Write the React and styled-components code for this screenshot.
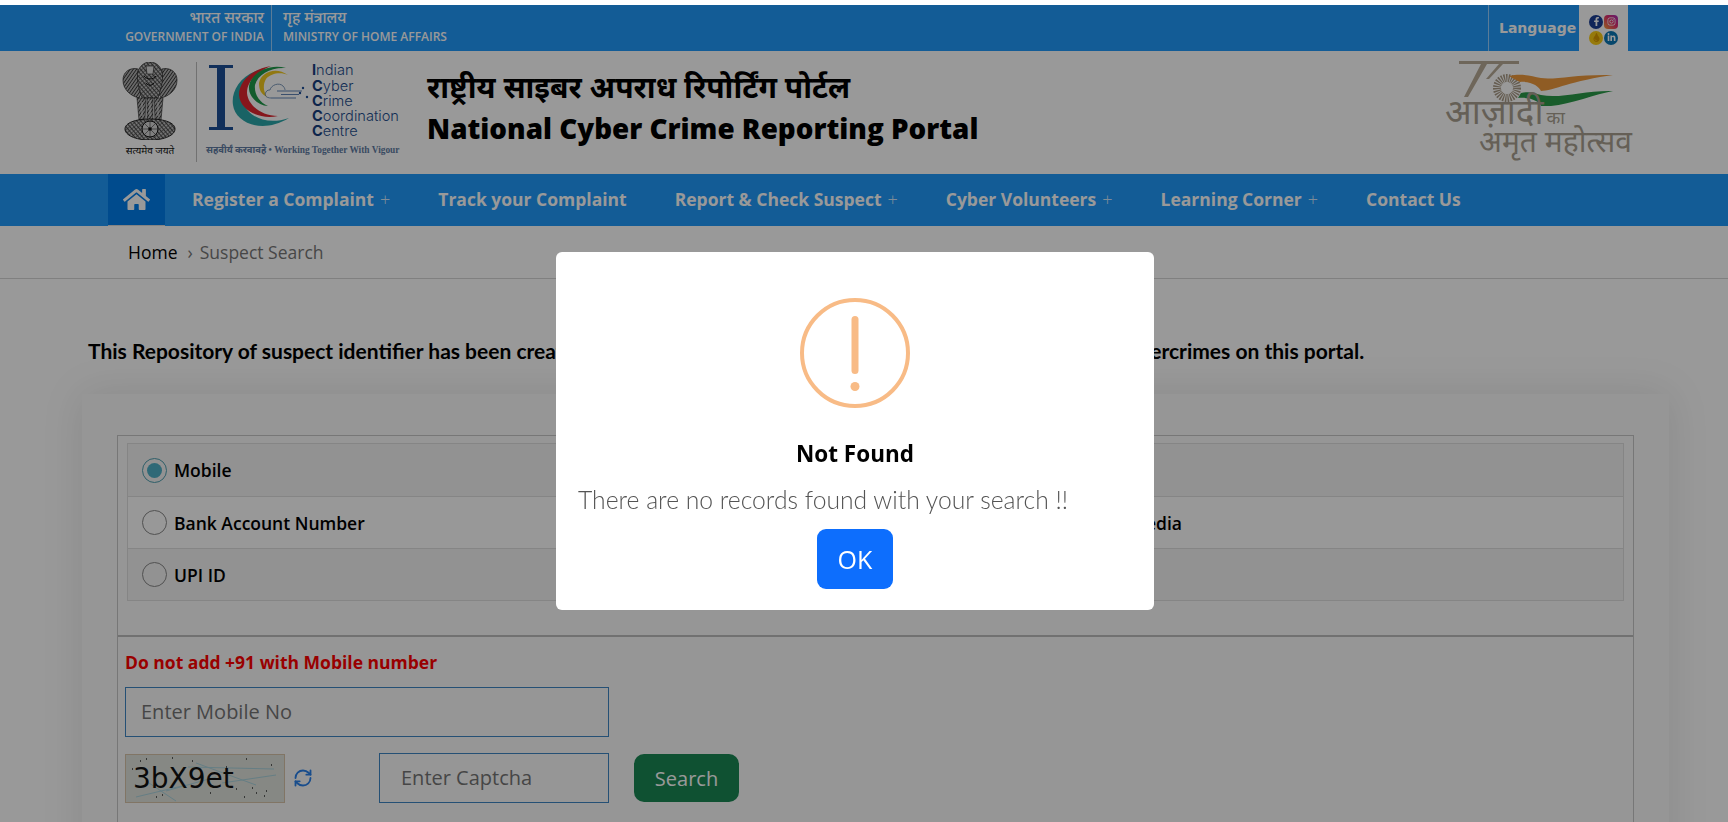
import React from 'react';
import styled, { createGlobalStyle } from 'styled-components';
import { FaHome, FaFacebookF, FaInstagram, FaLinkedinIn, FaTint } from 'react-icons/fa';
import { RefreshCw } from 'lucide-react';

const DEVA = `"Noto Sans Devanagari", "Lohit Devanagari", "Noto Sans", "DejaVu Sans", sans-serif`;
const SANS = `"Open Sans", "Noto Sans", sans-serif`;

const GlobalStyle = createGlobalStyle`
  html, body {
    margin: 0;
    height: 100%;
    overflow: hidden;
    background: #fff;
    font-family: ${SANS};
  }
  * { box-sizing: border-box; }
`;

const Page = styled.div`
  padding-top: 5px;
`;

const TopBar = styled.div`
  height: 46px;
  background: #2099fa;
  display: flex;
  justify-content: space-between;
  padding: 0 100px 0 124px;
  color: #fff;
`;

const GovGroup = styled.div`
  display: flex;
`;

const GovBlock = styled.div`
  display: flex;
  flex-direction: column;
  justify-content: center;
  text-align: ${(p) => (p.$right ? 'right' : 'left')};
  padding: ${(p) => (p.$right ? '0 7px 0 0' : '0 0 0 11px')};
  border-right: ${(p) => (p.$right ? '1px solid #ffffff88' : 'none')};
  width: ${(p) => (p.$right ? '148px' : 'auto')};
`;

const GovHindi = styled.div`
  font-family: ${DEVA};
  font-size: 15.4px;
  line-height: 18px;
  font-weight: 500;
  white-space: nowrap;
`;

const GovEnglish = styled.div`
  font-size: 12px;
  line-height: 18px;
  font-weight: 600;
  white-space: nowrap;
`;

const ToolGroup = styled.div`
  display: flex;
`;

const Language = styled.div`
  width: 91px;
  border-left: 1px solid #ffffff88;
  padding-left: 10px;
  display: flex;
  align-items: center;
  font-family: "DejaVu Sans", sans-serif;
  font-size: 14px;
  font-weight: 700;
`;

const Socials = styled.div`
  width: 49px;
  background: #fff;
  display: grid;
  grid-template-columns: 14px 14px;
  grid-auto-rows: 14px;
  gap: 2px 1px;
  justify-content: center;
  align-content: center;
  padding-top: 3px;
`;

const SocialDot = styled.span`
  width: 14px;
  height: 14px;
  border-radius: ${(p) => (p.$square ? '4px' : '50%')};
  background: ${(p) => p.$bg};
  color: ${(p) => p.$fg || '#fff'};
  display: flex;
  align-items: center;
  justify-content: center;
  font-size: 9px;
`;

const Header = styled.header`
  height: 123px;
  display: flex;
  align-items: center;
  padding: 0 93px 0 122px;
  background: #fff;
`;

const EmblemBlock = styled.div`
  width: 56px;
  margin-bottom: 6px;
  display: flex;
  flex-direction: column;
  align-items: center;
`;

const EmblemCaption = styled.div`
  margin-top: 6px;
  font-family: ${DEVA};
  font-size: 10px;
  line-height: 12px;
  color: #111;
  white-space: nowrap;
`;

const LogoDivider = styled.div`
  width: 1px;
  height: 100px;
  margin: 0 9px 2px 18px;
  background: #bcbcbc;
`;

const LogoBlock = styled.div`
  display: flex;
  flex-direction: column;
  width: 196px;
  margin-bottom: 6px;
`;

const LogoTop = styled.div`
  display: flex;
  padding-left: 3px;
`;

const LogoWords = styled.div`
  font-family: Inter, sans-serif;
  font-size: 14.6px;
  line-height: 15.3px;
  font-weight: 300;
  color: #1f4f8f;
  padding-top: 1px;
  b { font-weight: 700; color: #17407f; }
`;

const Tagline = styled.div`
  margin-top: 5px;
  font-family: "Liberation Serif", ${DEVA};
  font-size: 9.4px;
  font-weight: 700;
  color: #5f7ca3;
  white-space: nowrap;
`;

const Titles = styled.div`
  margin-left: 25px;
  padding-bottom: 8px;
  color: #000;
`;

const TitleHindi = styled.div`
  font-family: ${DEVA};
  font-size: 30px;
  line-height: 38px;
  font-weight: 700;
  white-space: nowrap;
`;

const TitleEnglish = styled.div`
  font-size: 27.8px;
  line-height: 36px;
  font-weight: 800;
  white-space: nowrap;
`;

const AzadiBlock = styled.div`
  margin-left: auto;
  margin-bottom: 10px;
  width: 190px;
  color: #a89f90;
  font-family: ${DEVA};
`;

const AzadiLine = styled.div`
  font-size: ${(p) => p.$size}px;
  line-height: ${(p) => p.$lead}px;
  padding-left: ${(p) => p.$indent}px;
  white-space: nowrap;
  small { font-size: 18px; margin-left: 3px; }
`;

const Nav = styled.nav`
  height: 52px;
  background: #2099fa;
  display: flex;
  padding-left: 108px;
`;

const HomeTab = styled.a`
  width: 57px;
  margin-right: 3px;
  background: #007deb;
  border-bottom: 1px solid #ddd;
  color: #fff;
  display: flex;
  align-items: center;
  justify-content: center;
  font-size: 27px;
`;

const NavItem = styled.a`
  padding: 0 24px 2px;
  display: flex;
  align-items: center;
  gap: 6px;
  color: #fff;
  font-size: 17.5px;
  font-weight: 700;
  white-space: nowrap;
`;

const Plus = styled.span`
  font-weight: 300;
  font-size: 18px;
  opacity: 0.8;
`;

const Crumbs = styled.div`
  height: 53px;
  border-bottom: 1px solid #d6d6d6;
  padding: 0 0 0 128px;
  display: flex;
  align-items: center;
  font-size: 17.5px;
  color: #000;
`;

const CrumbRest = styled.span`
  color: #777;
  margin-left: 10px;
  &::before {
    content: '›';
    margin-right: 7px;
  }
`;

const Main = styled.main`
  padding: 0 59px 0 82px;
`;

const Intro = styled.p`
  margin: 58px 0 29px 6px;
  font-family: Lato, sans-serif;
  font-size: 21px;
  line-height: 28px;
  font-weight: 700;
  color: #000;
  white-space: nowrap;
`;

const Card = styled.section`
  background: #fbfbfb;
  box-shadow: 0 0 40px rgba(0, 0, 0, 0.1);
  padding: 41px 35px 40px;
`;

const FieldBox = styled.div`
  border: 1px solid #c6c6c6;
`;

const ChoiceArea = styled.div`
  padding: 7px 9px 34px;
  border-bottom: 2px solid #bdbdbd;
`;

const ChoicePanel = styled.div`
  border: 1px solid #dedede;
`;

const ChoiceRow = styled.div`
  height: ${(p) => p.$h}px;
  display: grid;
  grid-template-columns: 755px 1fr;
  background: ${(p) => (p.$odd ? '#f3f3f3' : '#fdfdfd')};
  border-bottom: ${(p) => (p.$last ? 'none' : '1px solid #dedede')};
`;

const Choice = styled.label`
  display: flex;
  align-items: center;
  gap: 7px;
  padding-left: 14px;
  font-size: 17.5px;
  font-weight: 600;
  color: #000;
`;

const Radio = styled.span`
  width: 25px;
  height: 25px;
  border-radius: 50%;
  border: 1px solid ${(p) => (p.$on ? '#4f9fb0' : '#888')};
  display: flex;
  align-items: center;
  justify-content: center;
  &::after {
    content: '';
    width: 15px;
    height: 15px;
    border-radius: 50%;
    background: ${(p) => (p.$on ? '#4fb0c6' : 'transparent')};
  }
`;

const FormArea = styled.div`
  padding: 13px 7px 40px;
`;

const Warning = styled.div`
  font-size: 17.5px;
  line-height: 24px;
  font-weight: 700;
  color: #f00;
  margin-bottom: 13px;
`;

const TextField = styled.input`
  display: block;
  width: ${(p) => p.$w}px;
  height: 50px;
  border: 1px solid #3f86c4;
  background: transparent;
  padding: 0 ${(p) => p.$pad}px 2px;
  font-family: ${SANS};
  font-size: 20px;
  &::placeholder { color: #757575; opacity: 1; }
`;

const CaptchaRow = styled.div`
  margin-top: 16px;
  display: flex;
  align-items: center;
`;

const CaptchaImage = styled.div`
  width: 160px;
  height: 49px;
  border: 1px solid #d8c4a8;
  flex: none;
`;

const RefreshButton = styled.span`
  width: 94px;
  padding-left: 8px;
  color: #2a80ea;
  display: flex;
`;

const SearchButton = styled.button`
  margin-left: 25px;
  width: 105px;
  height: 48px;
  border: none;
  border-radius: 10px;
  background: #198754;
  color: #fff;
  font-family: ${SANS};
  font-size: 20px;
`;

const Overlay = styled.div`
  position: fixed;
  inset: 5px 18px 0 0;
  box-shadow: 18px 0 0 rgba(0, 0, 0, 0.4);
  background: rgba(0, 0, 0, 0.4);
  display: flex;
  justify-content: center;
  align-items: flex-start;
  padding-top: 247px;
`;

const Modal = styled.div`
  width: 598px;
  height: 358px;
  background: #fff;
  border-radius: 6px;
  display: flex;
  flex-direction: column;
  align-items: center;
  padding-top: 46px;
`;

const ModalTitle = styled.h2`
  margin: 28px 0 0;
  font-size: 22.5px;
  line-height: 36px;
  font-weight: 700;
  color: #000;
`;

const ModalText = styled.p`
  margin: 10px 0 0;
  padding-left: 22px;
  align-self: stretch;
  font-family: Lato, sans-serif;
  font-weight: 300;
  font-size: 24.7px;
  line-height: 36px;
  color: #545454;
  white-space: nowrap;
`;

const OkButton = styled.button`
  margin-top: 11px;
  width: 76px;
  height: 60px;
  border: none;
  border-radius: 9px;
  background: #0d6efd;
  color: #fff;
  font-family: ${SANS};
  font-size: 25px;
`;

function Emblem() {
  return (
    <svg width="56" height="78" viewBox="0 0 56 78">
      <defs>
        <pattern id="hatch" width="2.6" height="2.6" patternUnits="userSpaceOnUse" patternTransform="rotate(35)">
          <rect width="2.6" height="2.6" fill="#b0b0b0" />
          <rect width="0.8" height="2.6" fill="#2a2a2a" />
        </pattern>
        <pattern id="hatchCross" width="3" height="3" patternUnits="userSpaceOnUse" patternTransform="rotate(-40)">
          <rect width="3" height="3" fill="#bcbcbc" />
          <rect width="0.8" height="3" fill="#2a2a2a" />
          <rect width="3" height="0.6" fill="#444" />
        </pattern>
      </defs>
      {/* side lions */}
      <path d="M1 18C1 10 8 5 16 7L20 30L17 36C9 34 1 28 1 18Z" fill="url(#hatch)" stroke="#222" strokeWidth="0.7" />
      <path d="M55 18C55 10 48 5 40 7L36 30L39 36C47 34 55 28 55 18Z" fill="url(#hatch)" stroke="#222" strokeWidth="0.7" />
      {/* centre lion */}
      <path d="M16 9C19 2 24 0 28 0C32 0 37 2 40 9C42 18 38 30 36 36H20C18 30 14 18 16 9Z" fill="url(#hatchCross)" stroke="#222" strokeWidth="0.7" />
      <path d="M24 4H32L31 12H25Z" fill="#dedede" stroke="#222" strokeWidth="0.6" />
      <path d="M22 14C25 18 31 18 34 14M24 21C26 24 30 24 32 21" stroke="#111" strokeWidth="1" fill="none" />
      {/* legs */}
      <path d="M15 36H24L23 58H17ZM25 36H31L31 58H25ZM32 36H41L39 58H33Z" fill="url(#hatch)" stroke="#222" strokeWidth="0.6" />
      <path d="M20 40V54M28 38V54M36 40V54" stroke="#e6e6e6" strokeWidth="0.8" />
      {/* base */}
      <path d="M3 67C3 61 13 57 28 57C43 57 53 61 53 67C53 73 43 78 28 78C13 78 3 73 3 67Z" fill="url(#hatchCross)" stroke="#111" strokeWidth="0.9" />
      <circle cx="28" cy="67" r="8" fill="#d6d6d6" stroke="#111" strokeWidth="1" />
      <circle cx="28" cy="67" r="1.8" fill="#111" />
      <path d="M28 59V75M20 67H36M22.4 61.4L33.6 72.6M33.6 61.4L22.4 72.6" stroke="#111" strokeWidth="0.5" />
    </svg>
  );
}

function IccLogo() {
  return (
    <svg width="103" height="72" viewBox="98 14 103 72" fill="none" style={{ flex: 'none' }}>
      <path d="M98 17H122V20H114V79H122V82H98V79H106V20H98Z" fill="#1d4f97" />
      <path d="M148 22C128 28 120 45 122 57C124 74 150 87 178 70C155 78 136 68 132 54C129 42 135 30 148 22Z" fill="#2ba6a8" />
      <path d="M160 18C141 21 128 33 128 47C129 62 148 72 167 68C150 68 137 57 136 45C136 33 146 24 160 18Z" fill="#e0262f" />
      <path d="M175 20C158 15 140 25 138 38C137 48 146 57 157 58C148 54 143 46 144 37C147 26 160 19 175 20Z" fill="#1f9a4a" />
      <path d="M177 27C165 18 150 24 148 35C148 42 150 46 156 49C152 43 152 36 155 31C160 25 170 24 177 27Z" fill="#f2c91e" />
      <path d="M160 50C155 50 153 47 155 44C156 42 158 42 159 42C160 37 168 34 172 38C174 40 174 42 174 42" stroke="#5a7fa8" strokeWidth="0.8" />
      <path d="M160 50H185M166 43H191M170 46.5H188" stroke="#1d4f97" strokeWidth="0.7" />
      <circle cx="192" cy="40" r="1.2" fill="#1d4f97" />
      <circle cx="189" cy="45" r="1.2" fill="#1d4f97" />
      <circle cx="196" cy="49" r="1.2" fill="#1d4f97" />
    </svg>
  );
}

function AzadiMark() {
  return (
    <svg width="190" height="45" viewBox="64 60 190 45" style={{ display: 'block', overflow: 'visible' }}>
      <path d="M78 63H138V66H106L87 99H83L100 66H78Z" fill="#b8ab97" />
      <path d="M118 66H122L108 81H105Z" fill="#b8ab97" />
      <circle cx="126" cy="90" r="10" fill="none" stroke="#a89a86" strokeWidth="8" strokeDasharray="1.3 1" />
      <path d="M128 78C140 75 150 78 160 80C175 82 195 76 232 77C215 79 195 84 185 87C175 90 165 93 160 93C158 88 150 83 139 84C135 82 131 80 128 78Z" fill="#ef9a3d" />
      <path d="M140 95C150 93 155 96 160 97C180 101 205 92 232 93C215 96 190 106 170 108H160C158 103 150 99 137 100Z" fill="#2a9a48" />
    </svg>
  );
}

function Captcha() {
  return (
    <svg width="158" height="47" viewBox="0 0 158 47" style={{ display: 'block', background: '#dfe3dc' }}>
      <path d="M70 8L130 30M40 36L90 22M96 28L150 20M10 42L60 30M62 12L148 14M20 26L50 46" stroke="#a9d2dc" strokeWidth="1" fill="none" />
      <path d="M20 4h1M46 3h1M66 6h1M120 4h1M145 10h1M110 34h1M130 38h1M118 42h1M84 38h1M30 42h1M6 14h1M100 12h1M140 36h1M14 6h1M36 40h1M126 33h1M138 41h1" stroke="#333" strokeWidth="1.4" />
      <text x="7" y="33" fontFamily="'DejaVu Sans', sans-serif" fontSize="28" fill="#111">3bX9et</text>
    </svg>
  );
}

export default function App() {
  return (
    <>
      <GlobalStyle />
      <Page>
        <TopBar>
          <GovGroup>
            <GovBlock $right>
              <GovHindi>भारत सरकार</GovHindi>
              <GovEnglish>GOVERNMENT OF INDIA</GovEnglish>
            </GovBlock>
            <GovBlock>
              <GovHindi>गृह मंत्रालय</GovHindi>
              <GovEnglish>MINISTRY OF HOME AFFAIRS</GovEnglish>
            </GovBlock>
          </GovGroup>
          <ToolGroup>
            <Language>Language</Language>
            <Socials>
              <SocialDot $bg="#1c3f94"><FaFacebookF /></SocialDot>
              <SocialDot $square $bg="linear-gradient(45deg, #f9a03c, #e1306c 55%, #a52fc0)"><FaInstagram /></SocialDot>
              <SocialDot $bg="#facc15" $fg="#d99a00"><FaTint /></SocialDot>
              <SocialDot $bg="#0b77b5"><FaLinkedinIn /></SocialDot>
            </Socials>
          </ToolGroup>
        </TopBar>

        <Header>
          <EmblemBlock>
            <Emblem />
            <EmblemCaption>सत्यमेव जयते</EmblemCaption>
          </EmblemBlock>
          <LogoDivider />
          <LogoBlock>
            <LogoTop>
              <IccLogo />
              <LogoWords>
                <div><b>I</b>ndian</div>
                <div><b>C</b>yber</div>
                <div><b>C</b>rime</div>
                <div><b>C</b>oordination</div>
                <div><b>C</b>entre</div>
              </LogoWords>
            </LogoTop>
            <Tagline>सहवीर्यं करवावहै  •  Working Together With Vigour</Tagline>
          </LogoBlock>
          <Titles>
            <TitleHindi>राष्ट्रीय साइबर अपराध रिपोर्टिंग पोर्टल</TitleHindi>
            <TitleEnglish>National Cyber Crime Reporting Portal</TitleEnglish>
          </Titles>
          <AzadiBlock>
            <AzadiMark />
            <AzadiLine $size={35} $lead={26} $indent={0}>आज़ादी<small>का</small></AzadiLine>
            <AzadiLine $size={30} $lead={24} $indent={34}>अमृत महोत्सव</AzadiLine>
          </AzadiBlock>
        </Header>

        <Nav>
          <HomeTab><FaHome /></HomeTab>
          <NavItem>Register a Complaint <Plus>+</Plus></NavItem>
          <NavItem>Track your Complaint</NavItem>
          <NavItem>Report &amp; Check Suspect <Plus>+</Plus></NavItem>
          <NavItem>Cyber Volunteers <Plus>+</Plus></NavItem>
          <NavItem>Learning Corner <Plus>+</Plus></NavItem>
          <NavItem>Contact Us</NavItem>
        </Nav>

        <Crumbs>
          Home
          <CrumbRest>Suspect Search</CrumbRest>
        </Crumbs>

        <Main>
          <Intro>
            This Repository of suspect identifier has been created from the data of complaints by users who have reported cybercrimes on this portal.
          </Intro>
          <Card>
            <FieldBox>
              <ChoiceArea>
                <ChoicePanel>
                  <ChoiceRow $h={53} $odd>
                    <Choice><Radio $on />Mobile</Choice>
                    <Choice><Radio />Email ID</Choice>
                  </ChoiceRow>
                  <ChoiceRow $h={52}>
                    <Choice><Radio />Bank Account Number</Choice>
                    <Choice><Radio />Website URL and Social Media</Choice>
                  </ChoiceRow>
                  <ChoiceRow $h={51} $odd $last>
                    <Choice><Radio />UPI ID</Choice>
                    <Choice><Radio />Telegram ID</Choice>
                  </ChoiceRow>
                </ChoicePanel>
              </ChoiceArea>
              <FormArea>
                <Warning>Do not add +91 with Mobile number</Warning>
                <TextField $w={484} $pad={15} placeholder="Enter Mobile No" readOnly />
                <CaptchaRow>
                  <CaptchaImage><Captcha /></CaptchaImage>
                  <RefreshButton><RefreshCw size={20} strokeWidth={2.2} /></RefreshButton>
                  <TextField $w={230} $pad={21} placeholder="Enter Captcha" readOnly />
                  <SearchButton>Search</SearchButton>
                </CaptchaRow>
              </FormArea>
            </FieldBox>
          </Card>
        </Main>
      </Page>

      <Overlay>
        <Modal>
          <svg width="110" height="110" viewBox="0 0 110 110" fill="none">
            <circle cx="55" cy="55" r="53" stroke="#f8bb86" strokeWidth="4" />
            <rect x="51.5" y="18" width="7" height="58" rx="3.5" fill="#f8bb86" />
            <circle cx="55" cy="88.5" r="4.5" fill="#f8bb86" />
          </svg>
          <ModalTitle>Not Found</ModalTitle>
          <ModalText>There are no records found with your search !!</ModalText>
          <OkButton>OK</OkButton>
        </Modal>
      </Overlay>
    </>
  );
}
